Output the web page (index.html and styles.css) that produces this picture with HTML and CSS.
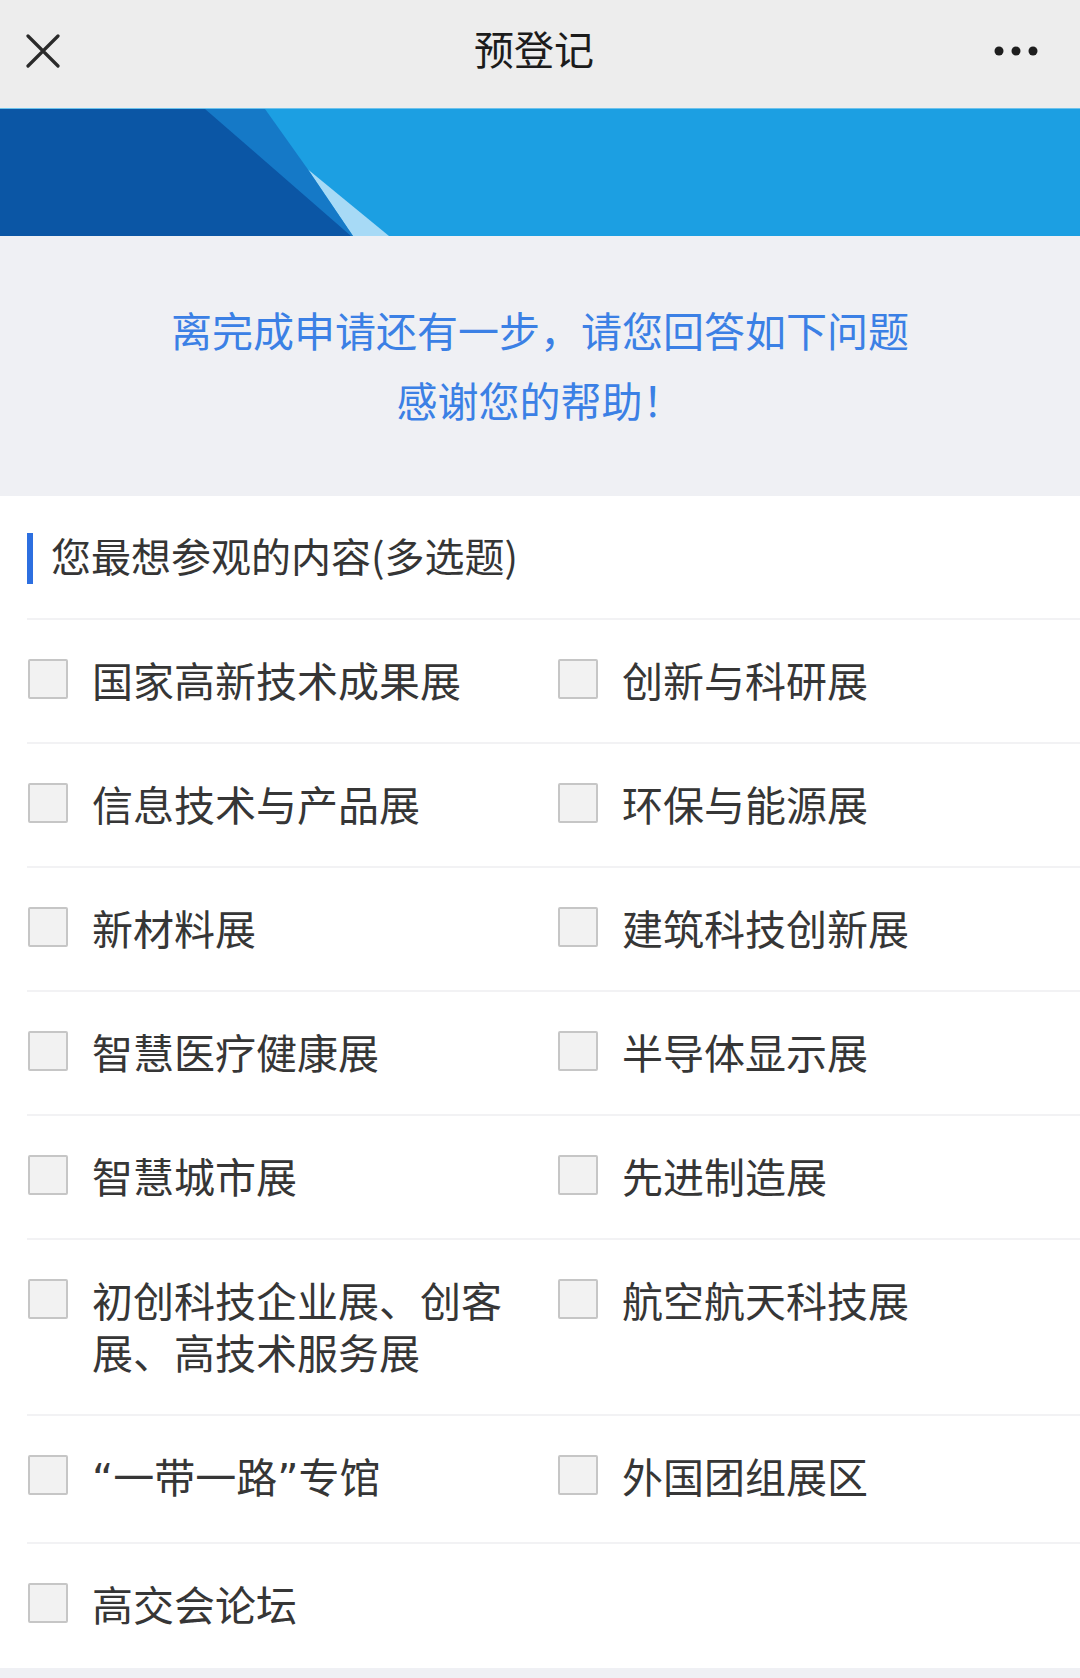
FILE: index.html
```html
<!DOCTYPE html>
<html lang="zh-CN">
<head>
<meta charset="utf-8">
<title>预登记</title>
<link rel="stylesheet" href="styles.css">
</head>
<body>
<header class="topbar">
  <div class="topbar-left">
    <svg class="icon-close" viewBox="0 0 34 34" width="34" height="34"><path d="M2 2 L32 32 M32 2 L2 32" stroke="#2a2a2a" stroke-width="3.2" stroke-linecap="round" fill="none"/></svg>
  </div>
  <div class="topbar-title">预登记</div>
  <div class="topbar-right">
    <svg class="icon-more" viewBox="0 0 44 10" width="44" height="10"><circle cx="5" cy="5" r="4.5" fill="#1e1e1e"/><circle cx="22" cy="5" r="4.5" fill="#1e1e1e"/><circle cx="39" cy="5" r="4.5" fill="#1e1e1e"/></svg>
  </div>
</header>

<div class="banner">
  <svg class="banner-art" viewBox="0 0 1080 128" preserveAspectRatio="none">
    <rect x="0" y="0" width="1080" height="128" fill="#1c9fe2"/>
    <polygon points="308,61 353,128 389,128" fill="#a7daf6"/>
    <polygon points="200,0 265,0 308,61 353,128 300,128" fill="#1579c7"/>
    <polygon points="0,0 205,0 351,128 0,128" fill="#0b56a5"/>
  </svg>
</div>

<section class="intro">
  <p class="intro-line">离完成申请还有一步，请您回答如下问题</p>
  <p class="intro-line">感谢您的帮助！</p>
</section>

<section class="question">
  <div class="q-title"><span class="q-bar"></span><span class="q-text">您最想参观的内容(多选题)</span></div>
  <div class="options">
    <div class="opt-row">
      <label class="opt"><span class="box"></span><span class="opt-text">国家高新技术成果展</span></label>
      <label class="opt"><span class="box"></span><span class="opt-text">创新与科研展</span></label>
    </div>
    <div class="opt-row">
      <label class="opt"><span class="box"></span><span class="opt-text">信息技术与产品展</span></label>
      <label class="opt"><span class="box"></span><span class="opt-text">环保与能源展</span></label>
    </div>
    <div class="opt-row">
      <label class="opt"><span class="box"></span><span class="opt-text">新材料展</span></label>
      <label class="opt"><span class="box"></span><span class="opt-text">建筑科技创新展</span></label>
    </div>
    <div class="opt-row">
      <label class="opt"><span class="box"></span><span class="opt-text">智慧医疗健康展</span></label>
      <label class="opt"><span class="box"></span><span class="opt-text">半导体显示展</span></label>
    </div>
    <div class="opt-row">
      <label class="opt"><span class="box"></span><span class="opt-text">智慧城市展</span></label>
      <label class="opt"><span class="box"></span><span class="opt-text">先进制造展</span></label>
    </div>
    <div class="opt-row">
      <label class="opt"><span class="box"></span><span class="opt-text">初创科技企业展、创客展、高技术服务展</span></label>
      <label class="opt"><span class="box"></span><span class="opt-text">航空航天科技展</span></label>
    </div>
    <div class="opt-row">
      <label class="opt"><span class="box"></span><span class="opt-text"><span class="q">“</span>一带一路<span class="q">”</span>专馆</span></label>
      <label class="opt"><span class="box"></span><span class="opt-text">外国团组展区</span></label>
    </div>
    <div class="opt-row last">
      <label class="opt"><span class="box"></span><span class="opt-text">高交会论坛</span></label>
    </div>
  </div>
</section>
<div class="page-foot"></div>
</body>
</html>
```

FILE: styles.css
```css
* { box-sizing: border-box; }

html, body {
  margin: 0;
  padding: 0;
}

body {
  background: #eff0f4;
  font-family: "Noto Sans CJK SC", "Noto Sans", sans-serif;
  color: #333;
}

.topbar {
  height: 108px;
  padding-bottom: 9px;
  background: #ededed;
  display: grid;
  grid-template-columns: 1fr auto 1fr;
  align-items: center;
}

.topbar-left {
  padding-left: 26px;
  padding-top: 2px;
  display: flex;
  align-items: center;
}

.icon-close { display: block; }

.topbar-title {
  font-size: 40px;
  line-height: 50px;
  color: #1c1c1c;
  margin-left: -12px;
  margin-top: -3px;
}

.topbar-right {
  display: flex;
  justify-content: flex-end;
  padding-right: 42px;
  padding-top: 2px;
}

.icon-more { display: block; }

.banner {
  height: 128px;
  border-top: 1px solid #6cc2ec;
}

.banner-art {
  display: block;
  width: 100%;
  height: 127px;
}

.intro {
  background: #eff0f4;
  padding: 58px 0 62px;
  text-align: center;
}

.intro-line {
  margin: 0;
  font-size: 41px;
  line-height: 70px;
  color: #3b80e5;
}

.question {
  background: #fff;
}

.q-title {
  height: 124px;
  margin-left: 27px;
  border-bottom: 2px solid #f2f2f4;
  display: flex;
  align-items: center;
}

.q-bar {
  width: 6px;
  height: 51px;
  background: #2d6fe0;
  margin-right: 18px;
  margin-top: 2px;
}

.q-text {
  font-size: 40px;
  line-height: 52px;
  color: #353535;
  margin-top: -4px;
}

.options {
  margin-left: 27px;
}

.opt-row {
  display: grid;
  grid-template-columns: 530px 1fr;
  padding: 33px 0 37px;
  border-bottom: 2px solid #f2f2f4;
}

.opt-row.last {
  border-bottom: none;
  padding-bottom: 39px;
}

.opt {
  display: flex;
  align-items: flex-start;
  padding-left: 1px;
  padding-right: 40px;
}

.box {
  flex: 0 0 40px;
  width: 40px;
  height: 40px;
  margin-top: 6px;
  margin-right: 24px;
  background: #f2f2f2;
  border: 2px solid #c6c6c6;
  border-radius: 2px;
}

.opt-text {
  font-size: 41px;
  line-height: 52px;
  color: #363636;
}

.q {
  font-family: "DejaVu Sans", sans-serif;
}

.page-foot {
  height: 16px;
  background: #eff0f4;
}
```
